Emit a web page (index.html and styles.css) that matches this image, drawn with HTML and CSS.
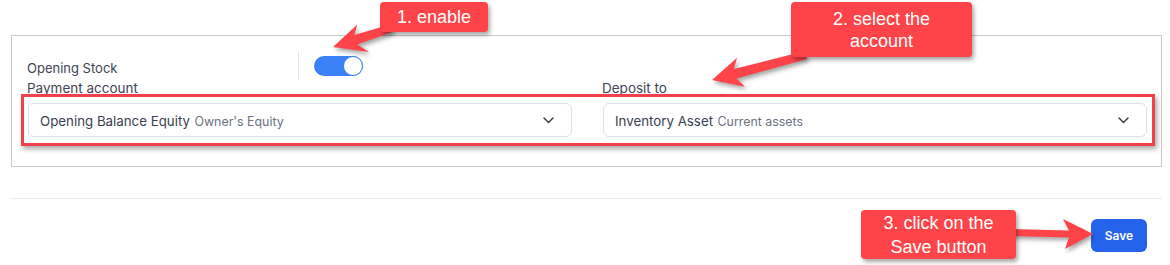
FILE: index.html
```html
<!DOCTYPE html>
<html lang="en">
<head>
<meta charset="utf-8">
<title>Opening Stock</title>
<link rel="stylesheet" href="styles.css">
</head>
<body>
<div class="page">
  <section class="card">
    <div class="stock-row">
      <span class="stock-label">Opening Stock</span>
      <span class="divider"></span>
      <span class="toggle"><span class="knob"></span></span>
    </div>
    <div class="fields">
      <div class="field">
        <label class="field-label">Payment account</label>
        <div class="select">
          <span class="sel-text"><span class="sel-main">Opening Balance Equity</span> <span class="sel-sub">Owner's Equity</span></span>
          <svg class="chev" width="11" height="7" viewBox="0 0 11 7"><path d="M1 1l4.5 4.5L10 1" fill="none" stroke="#2d3340" stroke-width="1.4" stroke-linecap="round" stroke-linejoin="round"/></svg>
        </div>
      </div>
      <div class="field">
        <label class="field-label">Deposit to</label>
        <div class="select">
          <span class="sel-text"><span class="sel-main">Inventory Asset</span> <span class="sel-sub">Current assets</span></span>
          <svg class="chev" width="11" height="7" viewBox="0 0 11 7"><path d="M1 1l4.5 4.5L10 1" fill="none" stroke="#2d3340" stroke-width="1.4" stroke-linecap="round" stroke-linejoin="round"/></svg>
        </div>
      </div>
    </div>
  </section>
  <div class="sep"></div>
  <div class="footer">
    <button class="save">Save</button>
  </div>

  <div class="highlight"></div>
  <svg class="arrows" width="1170" height="265" viewBox="0 0 1170 265">
    <g class="arrow">
      <polygon points="390.8,24.2 354.3,34.9 357.3,24.5 333,47 369,52 357.3,44.5 393.2,31.8"/>
      <polygon points="805,51.1 733.9,69 737.1,57.8 712,80 744.9,86.8 736.5,78.6 807,58.9"/>
      <polygon points="1010,229 1069,230.5 1063,219 1093,234 1065,249 1069,237.5 1010,236"/>
    </g>
  </svg>
  <div class="callout c1">1. enable</div>
  <div class="callout c2">2. select the<br>account</div>
  <div class="callout c3">3. click on the<br>Save button</div>
</div>
</body>
</html>
```

FILE: styles.css
```css
* { box-sizing: border-box; }
html, body { margin: 0; padding: 0; background: #fff; }
body {
  font-family: "Inter", "Noto Sans", sans-serif;
  color: #374151;
  width: 1170px;
  height: 265px;
  overflow: hidden;
}
.page {
  position: relative;
  padding: 35px 8px 0 11px;
  height: 265px;
}
.card {
  border: 1px solid #c9c9c9;
  padding: 15px 14px 29px 16px;
}
.stock-row {
  display: flex;
  align-items: center;
  height: 29px;
}
.stock-label {
  width: 271px;
  font-size: 13px;
  line-height: 16px;
  margin-top: 5px;
  margin-left: -1px;
  color: #3d4452;
}
.divider {
  width: 1px;
  height: 29px;
  background: #e3e6eb;
}
.toggle {
  margin-left: 15px;
  width: 49px;
  height: 20px;
  border-radius: 10px;
  background: #3b82f6;
  display: flex;
  justify-content: flex-end;
}
.knob {
  width: 20px;
  height: 20px;
  border-radius: 50%;
  background: #fff;
  border: 1.5px solid #3b82f6;
}
.fields {
  display: grid;
  grid-template-columns: 1fr 1fr;
  column-gap: 31px;
}
.field { display: flex; flex-direction: column; }
.field-label {
  font-size: 13.5px;
  line-height: 16px;
  height: 16px;
  margin-bottom: 7px;
  color: #3d4452;
  margin-left: -1px;
}
.select {
  height: 34px;
  border: 1px solid #d9dee7;
  border-radius: 6px;
  display: flex;
  align-items: center;
  justify-content: space-between;
  padding: 0 17px 0 11px;
  background: #fff;
}
.sel-main { font-size: 13.3px; color: #3a4150; }
.sel-sub { font-size: 12.4px; color: #6b7280; }
.chev { display: block; }
.sep {
  margin-top: 31px;
  border-top: 1px solid #ebebeb;
}
.footer {
  display: flex;
  justify-content: flex-end;
  padding: 20px 15px 0 0;
}
.save {
  width: 56px;
  height: 33px;
  border: none;
  border-radius: 6px;
  background: #2563eb;
  color: #fff;
  font-family: "Inter", "Liberation Sans", sans-serif;
  font-weight: 600;
  font-size: 12px;
  padding: 0;
}

/* annotation overlays */
.highlight {
  position: absolute;
  left: 21px;
  top: 94px;
  width: 1134px;
  height: 52px;
  border: 3px solid #f0404a;
  box-shadow: 2px 3px 5px rgba(0, 0, 0, 0.35);
}
.arrows {
  position: absolute;
  left: 0;
  top: 0;
  pointer-events: none;
}
.arrow polygon {
  fill: #fe4349;
  filter: drop-shadow(2px 3px 2px rgba(0, 0, 0, 0.35));
}
.callout {
  position: absolute;
  background: #fe4349;
  color: #fff;
  border-radius: 4px;
  font-family: "Liberation Sans", Arial, sans-serif;
  font-size: 18px;
  line-height: 22px;
  text-align: center;
  box-shadow: 2px 3px 4px rgba(0, 0, 0, 0.35);
  display: flex;
  align-items: center;
  justify-content: center;
}
.c1 { left: 380px; top: 2px; width: 108px; height: 30px; }
.c2 { left: 791px; top: 2px; width: 181px; height: 55px; }
.c3 { left: 861px; top: 210px; width: 155px; height: 49px; line-height: 24px; }
```
